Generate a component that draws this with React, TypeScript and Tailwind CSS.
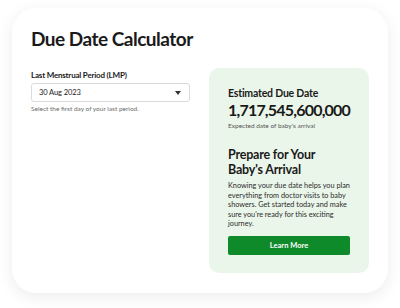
export default function App() {
  return (
    <div className="w-[400px] h-[308px] bg-white pl-3 pt-2 font-['Lato',sans-serif] text-[#1a1a1a]">
      <div className="w-[376px] h-[285px] rounded-[24px] bg-white shadow-[0_4px_16px_rgba(0,0,0,0.08)] px-[19px] pt-[18px] flex flex-col">
        <h1 className="text-[19px] font-bold leading-[26px] tracking-[-0.5px]">Due Date Calculator</h1>

        <div className="flex gap-[19px] mt-[16px]">
          {/* Input column */}
          <div className="w-[159px] pt-[1px]">
            <label className="block text-[8px] font-bold leading-[12px] tracking-[-0.2px]">Last Menstrual Period (LMP)</label>
            <div className="mt-[2px] h-[19px] border border-[#dadada] rounded-[3px] flex items-center justify-between pl-[7px] pr-[8px]">
              <span className="text-[7.5px] leading-none tracking-[-0.1px]">30 Aug 2023</span>
              <svg width="6" height="4" viewBox="0 0 6 4">
                <path d="M0 0 L6 0 L3 4 Z" fill="#333" />
              </svg>
            </div>
            <p className="mt-[2px] text-[6.5px] text-[#6b6b6b] leading-[9px]">Select the first day of your last period.</p>
          </div>

          {/* Result panel */}
          <div className="w-[160px] h-[205px] rounded-[10px] bg-[#ebf6eb] px-[19px] pt-[19px]">
            <div className="text-[10.5px] font-bold leading-[13px] tracking-[-0.2px]">Estimated Due Date</div>
            <div className="text-[16px] font-bold leading-[20px] tracking-[-0.8px]">1,717,545,600,000</div>
            <div className="mt-[1px] text-[6.5px] text-[#555] leading-[9px]">Expected date of baby's arrival</div>

            <div className="mt-[18px] text-[12.5px] font-bold leading-[14.5px] tracking-[-0.2px]">Prepare for Your<br />Baby's Arrival</div>
            <p className="mt-[4px] text-[7.3px] leading-[9.6px] text-[#2a2a2a]">
              Knowing your due date helps you plan everything from doctor visits to baby showers. Get started today and make sure you're ready for this exciting journey.
            </p>
            <button className="mt-[7px] w-[122px] h-[19px] rounded-[2px] bg-[#0f8a2b] text-white text-[7.5px] font-bold">Learn More</button>
          </div>
        </div>
      </div>
    </div>
  );
}
